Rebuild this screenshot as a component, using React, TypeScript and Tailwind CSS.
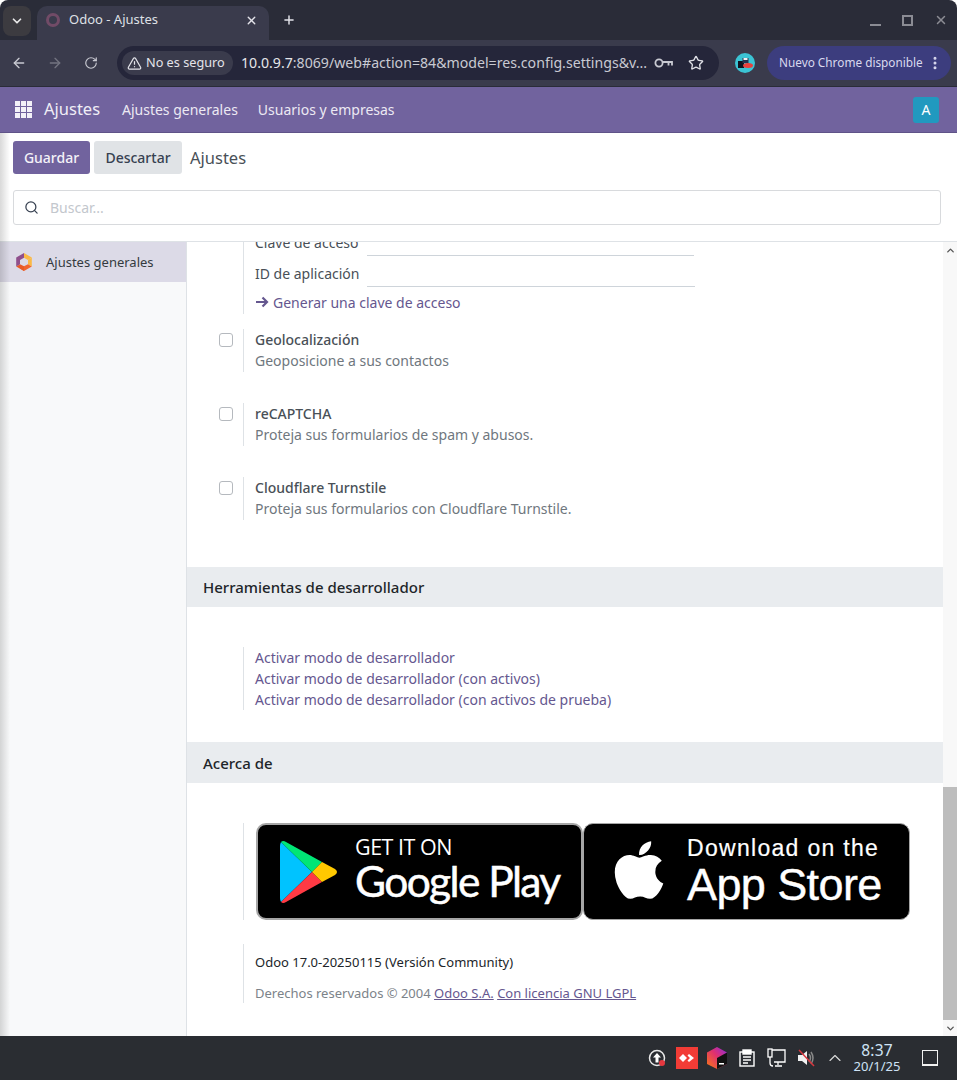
import React from 'react';
import { ArrowLeft, ArrowRight, RotateCw, Star, Search, TriangleAlert, X, Plus, ChevronDown, ChevronUp, EllipsisVertical } from 'lucide-react';
import { FaApple } from 'react-icons/fa';

const Tab = () => (
    <div className="flex items-center w-[232px] h-[34px] bg-[#3a3b4c] rounded-t-[10px] pl-[9px] pr-[11px] pb-[6px] ml-[6px]">
        <span className="w-[14px] h-[14px] rounded-full border-[3px] border-[#714b67]"></span>
        <span className="ml-[9px] text-[13px] text-[#dfe0e6] flex-1">Odoo - Ajustes</span>
        <X size={13} className="text-[#e4e4ea]" strokeWidth={2.5} />
    </div>
);

const BrowserChrome = () => (
    <div className="shrink-0">
        <div className="h-10 bg-[#2a2c38] flex items-end relative rounded-t-[8px]">
            <div className="w-7 h-[30px] ml-[3px] mb-1 rounded-lg bg-[#3c3b40] flex items-center justify-center text-[#e8e8e8]">
                <ChevronDown size={14} strokeWidth={3} />
            </div>
            <Tab />
            <Plus size={14} strokeWidth={2.5} className="ml-[13px] mb-[13px] text-[#e4e4ea]" />
            <div className="flex-1"></div>
            <div className="flex items-center gap-[21px] mb-[13px] mr-[9px] text-[#8b8c94]">
                <span className="w-[11px] h-[2px] mt-[9px] bg-[#8b8c94]"></span>
                <span className="w-[11px] h-[11px] border-2 border-[#8b8c94]"></span>
                <X size={14} strokeWidth={2.5} />
            </div>
        </div>
        <div className="h-[47px] bg-[#3a3b4c] flex items-center border-b border-[#2a2c38]">
            <ArrowLeft size={16} className="ml-[11px] text-[#c9cad2]" strokeWidth={2} />
            <ArrowRight size={16} className="ml-5 text-[#737480]" strokeWidth={2} />
            <RotateCw size={14} className="ml-[21px] text-[#c9cad2]" strokeWidth={2} />
            <div className="ml-[19px] w-[602px] h-[34px] rounded-full bg-[#25263a] flex items-center pl-[5px] pr-[15px]">
                <div className="h-6 w-[111px] shrink-0 rounded-full bg-[#3a3b4c] flex items-center pl-[5px] text-[13px] text-[#e4e4ea] whitespace-nowrap">
                    <TriangleAlert size={15} strokeWidth={2} />
                    <span className="ml-[4px] text-[12.7px]">No es seguro</span>
                </div>
                <div className="ml-2 text-[14.15px] flex-1 text-[#c9cad2] whitespace-nowrap">
                    <span className="text-[#e6e6ea]">10.0.9.7</span>:8069/web#action=84&amp;model=res.config.settings&amp;v...
                </div>
                <svg width="19" height="12" viewBox="0 0 19 12" fill="none" stroke="#c9cad2" strokeWidth="1.8" className="shrink-0">
                    <circle cx="5" cy="6" r="3.6" />
                    <path d="M9 5h9v3.5M14.5 6v2.5" />
                </svg>
                <Star size={16} className="ml-[15px] shrink-0 text-[#dfe0e6]" strokeWidth={2} />
            </div>
            <svg width="20" height="20" viewBox="0 0 20 20" className="ml-[16px]">
                <circle cx="10" cy="10" r="10" fill="#3bc4d4" />
                <rect x="3" y="8" width="6" height="7" fill="#101420" />
                <rect x="7.5" y="5" width="6" height="5" fill="#26324f" />
                <rect x="8.5" y="5" width="4" height="2" fill="#f0f0f0" />
                <ellipse cx="13" cy="12.5" rx="5" ry="2.5" fill="#e8403c" />
            </svg>
            <div className="ml-[12px] w-[184px] h-[34px] rounded-full bg-[#3c3d7e] flex items-center pl-3 text-[11.8px] text-[#d9d9ee] whitespace-nowrap">
                <span className="flex-1">Nuevo Chrome disponible</span>
                <EllipsisVertical size={16} strokeWidth={2.5} className="mr-[8px]" />
            </div>
        </div>
    </div>
);

const OdooNav = () => (
    <div className="h-[46px] shrink-0 bg-[#71639e] flex items-center text-white border-b border-[#5f5388]">
        <div className="ml-[15px] grid grid-cols-3 gap-[1.5px] w-[17px]">
            {Array.from({ length: 9 }).map((_, i) => (
                <span key={i} className="w-[4.5px] h-[4.5px] bg-[#f3f1f8]"></span>
            ))}
        </div>
        <span className="ml-[12px] w-[58px] text-[16.5px] text-[#f0eef6]">Ajustes</span>
        <span className="ml-[20px] text-[14px] text-[#ece9f3]">Ajustes generales</span>
        <span className="ml-[20px] text-[14px] text-[#ece9f3]">Usuarios y empresas</span>
        <div className="flex-1"></div>
        <div className="w-[26px] h-[26px] mr-[18px] rounded-[3px] bg-[#2199bf] flex items-center justify-center text-[14px]">A</div>
    </div>
);

const ControlPanel = () => (
    <div className="h-[109px] shrink-0 bg-white border-b border-[#dee2e6] px-[13px] pt-2">
        <div className="flex items-center h-[33px]">
            <button className="h-[33px] w-[77px] rounded-[3px] bg-[#71639e] text-[#f4f2f8] text-[14px] font-medium">Guardar</button>
            <button className="h-[33px] w-[88px] ml-1 rounded-[3px] bg-[#e0e3e6] text-[#374151] text-[14px] font-medium">Descartar</button>
            <span className="ml-2 pt-px text-[16.5px] text-[#495057]">Ajustes</span>
        </div>
        <div className="mt-4 h-[35px] w-[928px] border border-[#d8dadd] rounded-[3px] flex items-center pl-[10px]">
            <Search size={15} strokeWidth={2} className="text-[#374151]" />
            <span className="ml-[11px] text-[14px] text-[#c3c7cd]">Buscar...</span>
        </div>
    </div>
);

const OdooIcon = () => (
    <svg width="20" height="20" viewBox="0 0 20 20">
        <path d="M10 1 L17.8 5.5 L14 8 L10 5.8 Z" fill="#fbb945" />
        <path d="M17.8 5.5 V14.5 L14 12.2 V8 Z" fill="#fbb945" />
        <path d="M17.8 14.5 L10 19 L6 16.5 L10 14.2 L14 12.2 Z" fill="#f0652f" />
        <path d="M10 19 L2.2 14.5 L6 12.2 L10 14.2 Z" fill="#e85a26" />
        <path d="M2.2 14.5 V5.5 L10 1 V5.8 L6 8 V12.2 Z" fill="#8f4f8c" />
    </svg>
);

const Sidebar = () => (
    <div className="w-[187px] shrink-0 bg-[#f8f9fa] border-r border-[#dee2e6]">
        <div className="h-[40px] bg-[#dcdae7] flex items-center pl-[14px]">
            <OdooIcon />
            <span className="ml-[12px] pt-px text-[13px] text-[#343a40]">Ajustes generales</span>
        </div>
    </div>
);

const CheckRow = ({ title, text }: { title: string; text: string }) => (
    <div className="flex h-[43px]">
        <div className="w-[56px] pl-[32px] pt-1">
            <span className="block w-[14px] h-[14px] rounded-[3px] border border-[#b5b9be] bg-white"></span>
        </div>
        <div className="border-l border-[#dee2e6] pl-[11px] text-[14px] leading-[21px]">
            <div className="font-medium text-[#495057]">{title}</div>
            <div className="text-[#6f777e]">{text}</div>
        </div>
    </div>
);

const SectionHeader = ({ title, height }: { title: string; height: string }) => (
    <div className={`${height} bg-[#e9ecef] flex items-center pl-4 text-[15px] font-medium text-[#212529]`}>{title}</div>
);

const GooglePlayBadge = () => (
    <div className="w-[327px] h-[97px] bg-black rounded-[10px] border-2 border-[#a6a6a6] flex items-center pl-[22px]">
        <svg width="58" height="64" viewBox="0 0 58 64">
            <path d="M1 2 L32 32 L1 62 Q0 60 0 58 V6 Q0 4 1 2 Z" fill="#00c3ff" />
            <path d="M1 2 Q3 0 6 2 L42 22 L32 32 Z" fill="#00e676" />
            <path d="M1 62 Q3 64 6 62 L42 42 L32 32 Z" fill="#ff3a44" />
            <path d="M42 22 L55 29 Q59 32 55 35 L42 42 L32 32 Z" fill="#ffc900" />
        </svg>
        <div className="ml-[17px] -mt-[4px] text-white font-['Open_Sans','Noto_Sans',sans-serif] whitespace-nowrap">
            <div className="text-[21.5px] leading-[22px] tracking-[-0.5px] font-normal">GET IT ON</div>
            <div className="text-[42.5px] leading-[46px] tracking-[-1.6px] font-['Lato','Noto_Sans',sans-serif] [-webkit-text-stroke:0.5px_white]">Google Play</div>
        </div>
    </div>
);

const AppStoreBadge = () => (
    <div className="w-[327px] h-[97px] bg-black rounded-[10px] border border-[#a6a6a6] flex items-center pl-[22px]">
        <FaApple size={66} className="text-white shrink-0 -mt-[4px]" />
        <div className="ml-[15px] text-white font-['Liberation_Sans','Noto_Sans',sans-serif] whitespace-nowrap">
            <div className="text-[23px] leading-[26px] tracking-[1.3px] [-webkit-text-stroke:0.2px_white]">Download on the</div>
            <div className="text-[45px] leading-[48px] tracking-[-0.6px] [-webkit-text-stroke:0.4px_white]">App Store</div>
        </div>
    </div>
);

const ArrowGlyph = () => (
    <svg width="14" height="12" viewBox="0 0 14 12" fill="none" stroke="currentColor" strokeWidth="2.2">
        <path d="M1 6h11M7.5 1.5 12 6 7.5 10.5" />
    </svg>
);

const MainContent = () => (
    <div className="flex-1 bg-white overflow-hidden">
        {/* Clave de acceso queda cortada por arriba */}
        <div className="-mt-[15px] ml-[56px] border-l border-[#dee2e6] pl-[11px] text-[14px] text-[#495057]">
            <div className="flex items-center h-[31px]">
                <span className="w-[112px]">Clave de acceso</span>
                <span className="self-end mb-[2px] w-[327px] border-b border-[#ced4da]"></span>
            </div>
            <div className="flex items-center h-[31px]">
                <span className="w-[112px]">ID de aplicación</span>
                <span className="self-end mb-[2px] w-[328px] border-b border-[#ced4da]"></span>
            </div>
            <div className="flex items-center h-[25px] pt-px text-[#65578f]">
                <ArrowGlyph />
                <span className="ml-1">Generar una clave de acceso</span>
            </div>
        </div>

        <div className="mt-[15px] flex flex-col gap-[31px]">
            <CheckRow title="Geolocalización" text="Geoposicione a sus contactos" />
            <CheckRow title="reCAPTCHA" text="Proteja sus formularios de spam y abusos." />
            <CheckRow title="Cloudflare Turnstile" text="Proteja sus formularios con Cloudflare Turnstile." />
        </div>

        <div className="mt-[47px]">
            <SectionHeader title="Herramientas de desarrollador" height="h-10" />
        </div>
        <div className="mt-[40px] ml-[56px] border-l border-[#dee2e6] pl-[11px] text-[14px] leading-[21px] text-[#65578f]">
            <div>Activar modo de desarrollador</div>
            <div>Activar modo de desarrollador (con activos)</div>
            <div>Activar modo de desarrollador (con activos de prueba)</div>
        </div>

        <div className="mt-[32px]">
            <SectionHeader title="Acerca de" height="h-[41px] pt-px" />
        </div>
        <div className="mt-[40px] ml-[56px] border-l border-[#dee2e6] pl-3 flex">
            <GooglePlayBadge />
            <AppStoreBadge />
        </div>
        <div className="mt-[24px] ml-[56px] h-[59px] border-l border-[#dee2e6] pl-[11px] text-[13px]">
            <div className="pt-[8px] leading-[20px] text-[#212529]">Odoo 17.0-20250115 (Versión Community)</div>
            <div className="mt-[11px] leading-[20px] text-[#7c8389]">
                Derechos reservados © 2004 <span className="underline text-[#65578f]">Odoo S.A.</span> <span className="underline text-[#65578f]">Con licencia GNU LGPL</span>
            </div>
        </div>
    </div>
);

const Scrollbar = () => (
    <div className="w-[14px] shrink-0 bg-[#f8f8f8] flex flex-col items-center text-[#555]">
        <ChevronUp size={11} strokeWidth={3} className="mt-[3px]" />
        <div className="flex-1"></div>
        <div className="w-full h-[233px] bg-[#bdbdbd]"></div>
        <ChevronDown size={11} strokeWidth={3} className="mt-[3px] mb-[2px]" />
    </div>
);

const TaskbarIcons = () => (
    <div className="flex items-center text-white">
        <svg width="20" height="20" viewBox="0 0 20 20" fill="none">
            <circle cx="10" cy="10" r="7.5" stroke="#e8e8e8" strokeWidth="1.5" />
            <path d="M10 5 L14 9.5 H11.5 V14.5 H8.5 V9.5 H6 Z" fill="#fff" />
            <circle cx="15" cy="15" r="3" fill="#e5383f" />
        </svg>
        <div className="ml-[9px] w-[22px] h-[22px] bg-[#f23c36] flex items-center justify-center">
            <svg width="16" height="8" viewBox="0 0 16 8" fill="#fff">
                <path d="M4 0 L8 4 L4 8 L0 4 Z M10 0 L15 4 L10 8 L8.5 6.5 L11 4 L8.5 1.5 Z" />
            </svg>
        </div>
        <svg width="22" height="24" viewBox="0 0 22 24" className="ml-[8px]">
            <defs>
                <linearGradient id="jb" x1="0" y1="1" x2="1" y2="0">
                    <stop offset="0" stopColor="#f97a12" />
                    <stop offset="0.55" stopColor="#e0306f" />
                    <stop offset="1" stopColor="#8a2be2" />
                </linearGradient>
            </defs>
            <path d="M11 1 L21 6.5 V18 L11 23 L1 18 V6.5 Z" fill="url(#jb)" />
            <path d="M11 12 L21 6.5 V18 L11 23 Z" fill="#111" />
            <rect x="13" y="17" width="5" height="1.5" fill="#fff" />
        </svg>
        <svg width="16" height="18" viewBox="0 0 16 18" fill="none" stroke="#fff" strokeWidth="1.4" className="ml-[11px]">
            <rect x="1" y="3" width="14" height="14" />
            <rect x="4" y="1" width="8" height="4" fill="#fff" />
            <path d="M4 8h8M4 11h8M4 14h5" />
        </svg>
        <svg width="20" height="20" viewBox="0 0 20 20" fill="none" stroke="#fff" strokeWidth="1.3" className="ml-[12px]">
            <rect x="1" y="1" width="4" height="8" />
            <path d="M5 2 H18 V14 H7 M11 14 V17 M8 18 H15 M3 9 V15 Q3 18 6 18" />
        </svg>
        <svg width="20" height="20" viewBox="0 0 20 20" className="ml-[10px]">
            <path d="M1 7 H5 L10 3 V17 L5 13 H1 Z" fill="#f2f2f2" />
            <path d="M12 6 Q15 10 12 14 M14 4 Q18 10 14 16" fill="none" stroke="#888" strokeWidth="1.5" />
            <path d="M2 2 L17 18" stroke="#d9363e" strokeWidth="1.5" />
        </svg>
        <ChevronUp size={20} strokeWidth={1.4} className="ml-[8px] text-[#d8d8d8]" />
        <div className="ml-[7px] w-[50px] text-center text-[#cfe3f5] -mt-[2px]">
            <div className="text-[15.5px] leading-[18px] tracking-[0.2px]">8:37</div>
            <div className="text-[13px] leading-[14px]">20/1/25</div>
        </div>
        <div className="ml-[20px] mr-[19px] w-4 h-4 border-[1.5px] border-[#f2f2f2] border-b-[2.5px]"></div>
    </div>
);

const App: React.FC = () => {
    return (
        <div className="w-[957px] h-[1080px] flex flex-col overflow-hidden relative font-['Noto_Sans',sans-serif] bg-white">
            <BrowserChrome />
            <OdooNav />
            <ControlPanel />
            <div className="flex-1 flex min-h-0">
                <Sidebar />
                <MainContent />
                <Scrollbar />
            </div>
            <div className="h-[44px] shrink-0 bg-[#2a2d32] flex items-center justify-end">
                <TaskbarIcons />
            </div>
            {/* sombra de la ventana a la izquierda */}
            <div className="absolute left-0 top-[133px] h-[903px] w-[10px] bg-gradient-to-r from-black/15 to-transparent pointer-events-none"></div>
        </div>
    );
};

export default App;
